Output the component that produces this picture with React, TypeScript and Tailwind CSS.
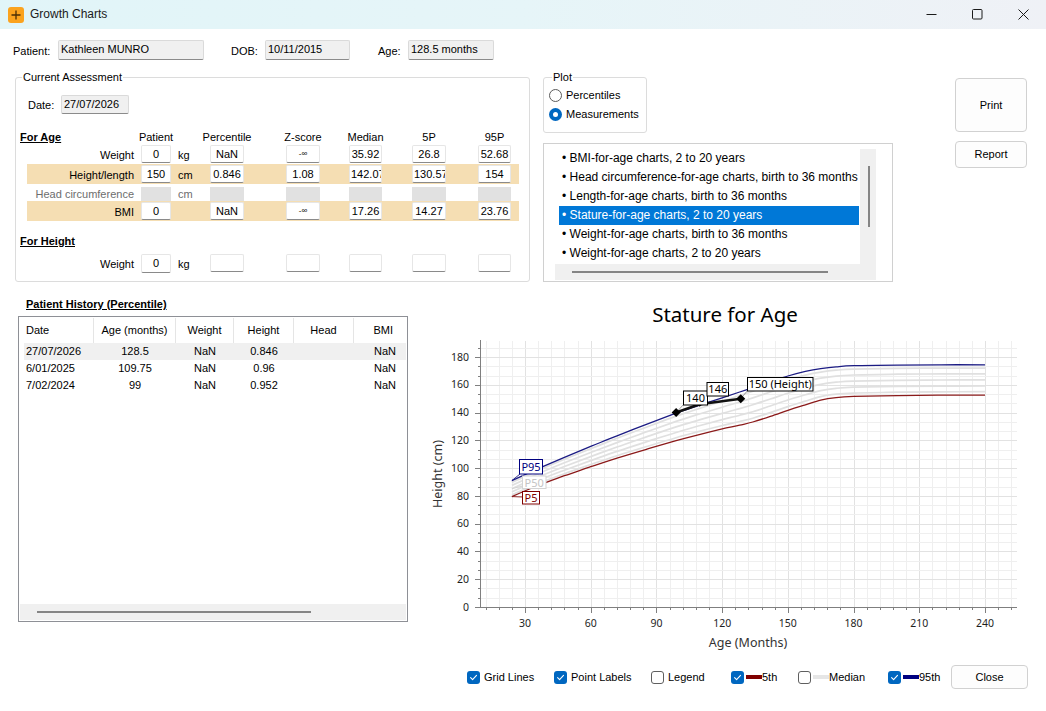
import React from "react";

type Pt = [number, number];

// chart scale (page pixels)
const ax = (m: number) => 459.29 + m * 2.1905;
const cy = (cm: number) => 607 - cm * 1.3889;

const AGES = [24, 36, 48, 60, 72, 86, 99, 110, 120, 128, 134, 142, 150, 158, 165, 172, 180, 200, 220, 240];
const P5 = [79.5, 87.5, 94.5, 101, 107.2, 113.8, 119.7, 124.3, 128.2, 130.9, 133.2, 137.2, 141.6, 145.6, 149, 150.8, 151.6, 152.2, 152.5, 152.6];
const P95 = [91, 99.6, 107.8, 115.6, 123.2, 131.8, 139.6, 145.5, 150.6, 154.8, 158, 162.3, 166.3, 169.6, 171.6, 172.9, 173.7, 174.2, 174.4, 174.4];
const MID = [0.11, 0.3, 0.5, 0.7, 0.89];

function smoothPath(pts: Pt[]) {
  const f = (n: number) => n.toFixed(1);
  let d = `M${f(pts[0][0])},${f(pts[0][1])}`;
  for (let i = 0; i < pts.length - 1; i++) {
    const p0 = pts[i - 1] ?? pts[i];
    const p1 = pts[i];
    const p2 = pts[i + 1];
    const p3 = pts[i + 2] ?? p2;
    const c1x = p1[0] + (p2[0] - p0[0]) / 6;
    const c1y = p1[1] + (p2[1] - p0[1]) / 6;
    const c2x = p2[0] - (p3[0] - p1[0]) / 6;
    const c2y = p2[1] - (p3[1] - p1[1]) / 6;
    d += ` C${f(c1x)},${f(c1y)} ${f(c2x)},${f(c2y)} ${f(p2[0])},${f(p2[1])}`;
  }
  return d;
}

const curve = (vals: number[]) => smoothPath(AGES.map((a, i) => [ax(a), cy(vals[i])] as Pt));
const midCurve = (fr: number) => curve(P5.map((v, i) => v + (P95[i] - v) * fr));

const POINTS: { m: number; cm: number; r: number }[] = [
  { m: 99, cm: 140, r: 4.5 },
  { m: 109.75, cm: 146, r: 2.5 },
  { m: 128.5, cm: 150, r: 4.5 },
];

const LIST = [
  "BMI-for-age charts, 2 to 20 years",
  "Head circumference-for-age charts, birth to 36 months",
  "Length-for-age charts, birth to 36 months",
  "Stature-for-age charts, 2 to 20 years",
  "Weight-for-age charts, birth to 36 months",
  "Weight-for-age charts, 2 to 20 years",
];

const HISTORY = [
  { date: "27/07/2026", age: "128.5", w: "NaN", h: "0.846", bmi: "NaN", hl: true },
  { date: "6/01/2025", age: "109.75", w: "NaN", h: "0.96", bmi: "NaN", hl: false },
  { date: "7/02/2024", age: "99", w: "NaN", h: "0.952", bmi: "NaN", hl: false },
];

function ReadOnly({ v, cls }: { v: string; cls: string }) {
  return (
    <div className={`${cls} h-[20px] bg-[#f0f0f0] border border-[#dadada] border-b-[#8b8b8b] rounded-[2px] pl-[2px] leading-[17px] whitespace-nowrap overflow-hidden`}>
      {v}
    </div>
  );
}

function NumBox({ v, cls }: { v?: string; cls: string }) {
  const small = v === "-∞";
  return (
    <div className={`${cls} h-[18px] bg-white border border-[#e6e6e6] border-b-[#8a8a8a] rounded-[2px] px-[1px] text-center leading-[16px] whitespace-nowrap overflow-hidden ${small ? "text-[8px]" : ""}`}>
      {v}
    </div>
  );
}

function Gray({ cls }: { cls: string }) {
  return <div className={`${cls} h-[14px] bg-[#e1e1e1]`} />;
}

function DataRow({ label, patient, unit, vals, band }: { label: string; patient: string; unit: string; vals: string[]; band?: boolean }) {
  return (
    <div className={`ml-[11px] w-[492px] h-[20px] flex items-center ${band ? "bg-[#f5deb3]" : ""}`}>
      <span className="w-[114px] text-right pr-[7px] pt-[3px] whitespace-nowrap">{label}</span>
      <NumBox cls="w-[30px]" v={patient} />
      <span className="w-[39px] pl-[7px] pt-[3px]">{unit}</span>
      <NumBox cls="w-[34px]" v={vals[0]} />
      <NumBox cls="w-[34px] ml-[42px]" v={vals[1]} />
      <NumBox cls="w-[33px] ml-[29px]" v={vals[2]} />
      <NumBox cls="w-[34px] ml-[30px]" v={vals[3]} />
      <NumBox cls="w-[33px] ml-[32px]" v={vals[4]} />
    </div>
  );
}

function Radio({ on, label }: { on?: boolean; label: string }) {
  return (
    <div className="h-[19px] flex items-center pl-[5px]">
      {on ? (
        <span className="w-[13px] h-[13px] rounded-full bg-[#0067c0] flex items-center justify-center">
          <span className="w-[5px] h-[5px] rounded-full bg-white" />
        </span>
      ) : (
        <span className="w-[13px] h-[13px] rounded-full border border-[#5b5b5b] bg-white" />
      )}
      <span className="ml-[4px]">{label}</span>
    </div>
  );
}

function Check({ on }: { on?: boolean }) {
  return on ? (
    <span className="w-[13px] h-[13px] shrink-0 rounded-[3px] bg-[#0067c0] flex items-center justify-center">
      <svg width="9" height="9" viewBox="0 0 9 9" fill="none">
        <path d="M1.6 4.7 L3.6 6.7 L7.5 2.4" stroke="#fff" strokeWidth="1.1" strokeLinecap="round" strokeLinejoin="round" />
      </svg>
    </span>
  ) : (
    <span className="w-[13px] h-[13px] shrink-0 rounded-[3px] border border-[#5f5f5f] bg-white" />
  );
}

function Chart() {
  const vLines: number[] = [];
  for (let m = 12; m <= 252; m += 6) vLines.push(m);
  const hLines: number[] = [];
  for (let k = 0; k <= 28; k++) hLines.push(k);
  const font = "'Noto Sans', 'Open Sans', sans-serif";
  const pts = POINTS.map((p) => [ax(p.m), cy(p.cm)] as Pt);

  return (
    <svg width={620} height={360} viewBox="420 295 620 360" className="block" fontFamily={font}>
      <text x={725} y={321.5} textAnchor="middle" fontSize={20.5} fill="#000">Stature for Age</text>

      {/* grid */}
      <g shapeRendering="crispEdges">
        {vLines.map((m) => (
          <line key={`v${m}`} x1={Math.round(ax(m)) + 0.5} x2={Math.round(ax(m)) + 0.5} y1={341} y2={607} stroke={m % 30 === 0 ? "#e2e2e2" : "#efefef"} />
        ))}
        {hLines.map((k) => (
          <line key={`h${k}`} x1={480} x2={1016.5} y1={Math.round(cy((k * 20) / 3)) + 0.5} y2={Math.round(cy((k * 20) / 3)) + 0.5} stroke={k % 3 === 0 ? "#e2e2e2" : "#efefef"} />
        ))}
        {hLines.map((k) => (
          <line key={`yt${k}`} x1={k % 3 === 0 ? 475 : 477.5} x2={480.5} y1={Math.round(cy((k * 20) / 3)) + 0.5} y2={Math.round(cy((k * 20) / 3)) + 0.5} stroke="#808080" />
        ))}
        {vLines.map((m) => (
          <line key={`xt${m}`} x1={Math.round(ax(m)) + 0.5} x2={Math.round(ax(m)) + 0.5} y1={607} y2={m % 30 === 0 ? 612.5 : 610} stroke="#808080" />
        ))}
        <line x1={480.5} x2={480.5} y1={340} y2={607.5} stroke="#7f7f7f" />
        <line x1={480} x2={1016.5} y1={607.5} y2={607.5} stroke="#7f7f7f" />
      </g>

      {/* axis labels */}
      {[0, 20, 40, 60, 80, 100, 120, 140, 160, 180].map((v) => (
        <text key={`yl${v}`} x={469} y={cy(v) + 3.7} textAnchor="end" fontSize={10.5} fill="#1e1e1e">{v}</text>
      ))}
      {[30, 60, 90, 120, 150, 180, 210, 240].map((m) => (
        <text key={`xl${m}`} x={ax(m)} y={626.5} textAnchor="middle" fontSize={10.5} fill="#1e1e1e">{m}</text>
      ))}
      <text transform="translate(442,474) rotate(-90)" textAnchor="middle" fontSize={12.5} fill="#333">Height (cm)</text>
      <text x={748} y={647} textAnchor="middle" fontSize={12.5} fill="#333">Age (Months)</text>

      {/* percentile curves */}
      {MID.map((fr) => (
        <path key={fr} d={midCurve(fr)} fill="none" stroke="#e0e0e0" strokeWidth={1.7} />
      ))}
      <path d={curve(P95)} fill="none" stroke="#1c1c84" strokeWidth={1.3} />
      <path d={curve(P5)} fill="none" stroke="#8b1a1a" strokeWidth={1.3} />

      {/* curve labels */}
      <line x1={ax(24)} y1={cy(91)} x2={520} y2={474} stroke="#1c1c84" strokeWidth={0.9} />
      <rect x={519.5} y={459.5} width={23} height={14.5} fill="#fff" stroke="#000080" />
      <text x={531} y={471} textAnchor="middle" fontSize={11} fill="#000080">P95</text>
      <line x1={ax(24)} y1={cy(85.25)} x2={523} y2={486} stroke="#d0d0d0" strokeWidth={0.9} />
      <rect x={522.5} y={476} width={23.5} height={12.5} fill="#fff" stroke="#d3d3d3" />
      <text x={534.2} y={486.5} textAnchor="middle" fontSize={11} fill="#c4c4c4">P50</text>
      <line x1={ax(24)} y1={cy(79.5)} x2={523} y2={497} stroke="#8b1a1a" strokeWidth={0.9} />
      <rect x={522.5} y={491.5} width={17} height={12.5} fill="#fff" stroke="#800000" />
      <text x={531} y={502} textAnchor="middle" fontSize={11} fill="#800000">P5</text>

      {/* patient points */}
      <line x1={pts[0][0]} y1={pts[0][1]} x2={684} y2={404} stroke="#777" strokeWidth={0.7} />
      <line x1={pts[1][0]} y1={pts[1][1]} x2={707} y2={395} stroke="#777" strokeWidth={0.7} />
      <line x1={pts[2][0]} y1={pts[2][1]} x2={748} y2={390} stroke="#777" strokeWidth={0.7} />
      <polyline points={pts.map((p) => p.join(",")).join(" ")} fill="none" stroke="#111" strokeWidth={2.6} strokeLinejoin="round" />
      {POINTS.map((p, i) => (
        <polygon
          key={p.m}
          points={`${pts[i][0]},${pts[i][1] - p.r} ${pts[i][0] + p.r},${pts[i][1]} ${pts[i][0]},${pts[i][1] + p.r} ${pts[i][0] - p.r},${pts[i][1]}`}
          fill="#000"
        />
      ))}
      <rect x={683.5} y={391} width={24} height={14} fill="#fff" stroke="#000" />
      <text x={695.5} y={402} textAnchor="middle" fontSize={11} fill="#000">140</text>
      <rect x={707} y={382.5} width={21.5} height={13.5} fill="#fff" stroke="#000" />
      <text x={717.8} y={393.3} textAnchor="middle" fontSize={11} fill="#000">146</text>
      <rect x={747.5} y={377.5} width={65.5} height={13.5} fill="#fff" stroke="#000" />
      <text x={780.2} y={388.3} textAnchor="middle" fontSize={11} fill="#000">150 (Height)</text>
    </svg>
  );
}

export default function App() {
  return (
    <div className="w-[1046px] h-[711px] bg-white overflow-hidden flex flex-col font-['Liberation_Sans',Arial,sans-serif] text-[11px] leading-[13px] text-black">
      {/* title bar */}
      <div className="h-[29px] shrink-0 flex items-center bg-linear-to-r from-[#e1f5f8] via-[#e6f5f8] to-[#eff1f6]">
        <div className="ml-[8px] w-[16px] h-[16px] rounded-[3px] bg-[#fba31e] flex items-center justify-center">
          <svg width="10" height="10" viewBox="0 0 10 10">
            <path d="M5 0.5 V9.5 M0.5 5 H9.5" stroke="#4a2e05" strokeWidth="1.3" />
          </svg>
        </div>
        <span className="ml-[6px] text-[12px] text-[#1a1a1a]">Growth Charts</span>
        <div className="ml-auto flex">
          <div className="w-[46px] h-[29px] flex items-center justify-center">
            <svg width="11" height="11" viewBox="0 0 11 11"><path d="M0.5 5.5 H10.5" stroke="#1a1a1a" /></svg>
          </div>
          <div className="w-[46px] h-[29px] flex items-center justify-center">
            <svg width="11" height="11" viewBox="0 0 11 11"><rect x="0.5" y="0.5" width="9.5" height="9.5" rx="1" fill="none" stroke="#1a1a1a" /></svg>
          </div>
          <div className="w-[46px] h-[29px] flex items-center justify-center">
            <svg width="11" height="11" viewBox="0 0 11 11"><path d="M0.5 0.5 L10.5 10.5 M10.5 0.5 L0.5 10.5" stroke="#1a1a1a" /></svg>
          </div>
        </div>
      </div>

      {/* patient row */}
      <div className="mt-[11px] h-[20px] shrink-0 flex items-center pl-[13px]">
        <span className="w-[45px] pt-[2px]">Patient:</span>
        <ReadOnly cls="w-[146px]" v="Kathleen MUNRO" />
        <span className="ml-[27px] w-[34px] pt-[2px]">DOB:</span>
        <ReadOnly cls="w-[85px]" v="10/11/2015" />
        <span className="ml-[28px] w-[30px] pt-[2px]">Age:</span>
        <ReadOnly cls="w-[86px]" v="128.5 months" />
      </div>

      {/* assessment + plot options */}
      <div className="mt-[11px] h-[212px] shrink-0 flex items-start">
        <fieldset className="ml-[15px] w-[515px] h-[211px] border border-[#dcdcdc] rounded-[3px] min-w-0">
          <legend className="ml-[6px] px-[1px] leading-[13px]">Current Assessment</legend>
          <div className="mt-[11px] h-[19px] flex items-center pl-[12px]">
            <span className="w-[33px] pt-[2px]">Date:</span>
            <div className="w-[68px] h-[19px] bg-[#f0f0f0] border border-[#dadada] border-b-[#8b8b8b] rounded-[2px] pl-[2px] leading-[16px]">27/07/2026</div>
          </div>

          <div className="mt-[16px] h-[14px] flex items-center ml-[4px]">
            <span className="w-[121px] font-bold underline">For Age</span>
            <span className="w-[30px] flex justify-center whitespace-nowrap">Patient</span>
            <span className="w-[39px]" />
            <span className="w-[34px] flex justify-center whitespace-nowrap">Percentile</span>
            <span className="w-[34px] ml-[42px] flex justify-center whitespace-nowrap">Z-score</span>
            <span className="w-[33px] ml-[29px] flex justify-center whitespace-nowrap">Median</span>
            <span className="w-[34px] ml-[30px] flex justify-center whitespace-nowrap">5P</span>
            <span className="w-[33px] ml-[32px] flex justify-center whitespace-nowrap">95P</span>
          </div>

          <DataRow label="Weight" patient="0" unit="kg" vals={["NaN", "-∞", "35.92", "26.8", "52.68"]} />
          <DataRow band label="Height/length" patient="150" unit="cm" vals={["0.846", "1.08", "142.07", "130.57", "154"]} />
          <div className="ml-[11px] w-[492px] h-[17px] flex items-end text-[#6d6d6d]">
            <span className="w-[114px] text-right pr-[7px] whitespace-nowrap">Head circumference</span>
            <Gray cls="w-[30px]" />
            <span className="w-[39px] pl-[7px]">cm</span>
            <Gray cls="w-[34px]" />
            <Gray cls="w-[34px] ml-[42px]" />
            <Gray cls="w-[33px] ml-[29px]" />
            <Gray cls="w-[34px] ml-[30px]" />
            <Gray cls="w-[33px] ml-[32px]" />
          </div>
          <DataRow band label="BMI" patient="0" unit="" vals={["NaN", "-∞", "17.26", "14.27", "23.76"]} />

          <div className="mt-[13px] h-[14px] flex items-center ml-[4px]">
            <span className="font-bold underline">For Height</span>
          </div>
          <div className="mt-[5px] ml-[11px] w-[492px] h-[20px] flex items-center">
            <span className="w-[114px] text-right pr-[7px] pt-[3px]">Weight</span>
            <NumBox cls="w-[30px] h-[19px]" v="0" />
            <span className="w-[39px] pl-[7px] pt-[3px]">kg</span>
            <NumBox cls="w-[34px]" />
            <NumBox cls="w-[34px] ml-[42px]" />
            <NumBox cls="w-[33px] ml-[29px]" />
            <NumBox cls="w-[34px] ml-[30px]" />
            <NumBox cls="w-[33px] ml-[32px]" />
          </div>
        </fieldset>

        <div className="ml-[13px] w-[350px] flex flex-col">
          <fieldset className="w-[104px] h-[62px] border border-[#dcdcdc] rounded-[3px] min-w-0">
            <legend className="ml-[8px] px-[1px] leading-[13px]">Plot</legend>
            <div className="mt-[2px]">
              <Radio label="Percentiles" />
              <Radio on label="Measurements" />
            </div>
          </fieldset>

          <div className="mt-[10px] h-[139px] w-[350px] border border-[#d0d0d0] pl-[11px] pt-[5px]">
            <div className="w-[321px] h-[131px] bg-[#f0f0f0] flex flex-col">
              <div className="h-[115px] flex">
                <div className="w-[305px] h-[115px] bg-white overflow-hidden text-[12px] leading-[19px]">
                  {LIST.map((item) => {
                    const sel = item.startsWith("Stature");
                    return (
                      <div key={item} className={`ml-[4px] w-[300px] h-[19px] pl-[3px] whitespace-nowrap ${sel ? "bg-[#0078d7] text-white" : ""}`}>
                        • {item}
                      </div>
                    );
                  })}
                </div>
                <div className="flex-1">
                  <div className="ml-[8px] mt-[17px] w-[2px] h-[61px] bg-[#858585]" />
                </div>
              </div>
              <div className="flex-1 flex items-center">
                <div className="ml-[17px] w-[256px] h-[2px] bg-[#858585]" />
              </div>
            </div>
          </div>
        </div>

        <div className="ml-[62px] w-[72px] flex flex-col">
          <button className="mt-[7px] h-[54px] rounded-[4px] border border-[#d1d1d1] bg-[#fdfdfd] text-[11px]">Print</button>
          <button className="mt-[9px] h-[27px] rounded-[4px] border border-[#d1d1d1] bg-[#fdfdfd] text-[11px]">Report</button>
        </div>
      </div>

      {/* history + chart */}
      <div className="h-[378px] shrink-0 flex items-start">
        <div className="ml-[18px] w-[390px]">
          <div className="mt-[15px] h-[13px] pl-[8px] font-bold underline">Patient History (Percentile)</div>
          <div className="mt-[5px] h-[306px] border border-[#8e9096] flex flex-col">
            <div className="mt-[1px] h-[25px] flex">
              <div className="w-[75px] pl-[7px] flex items-center border-r border-[#e5e5e5]">Date</div>
              <div className="w-[82px] flex items-center justify-center border-r border-[#e5e5e5]">Age (months)</div>
              <div className="w-[58px] flex items-center justify-center border-r border-[#e5e5e5]">Weight</div>
              <div className="w-[60px] flex items-center justify-center border-r border-[#e5e5e5]">Height</div>
              <div className="w-[60px] flex items-center justify-center border-r border-[#e5e5e5]">Head</div>
              <div className="flex-1 flex items-center justify-end pr-[14px]">BMI</div>
            </div>
            {HISTORY.map((r) => (
              <div key={r.date} className={`ml-[5px] mr-[1px] h-[17px] flex items-center ${r.hl ? "bg-[#f0f0f0]" : ""}`}>
                <div className="w-[70px] pl-[2px]">{r.date}</div>
                <div className="w-[82px] text-center">{r.age}</div>
                <div className="w-[58px] text-center">{r.w}</div>
                <div className="w-[60px] text-center">{r.h}</div>
                <div className="w-[60px]" />
                <div className="flex-1 text-right pr-[10px]">{r.bmi}</div>
              </div>
            ))}
            <div className="flex-1" />
            <div className="h-[16px] mx-[1px] mb-[1px] bg-[#f0f0f0] flex items-center">
              <div className="ml-[17px] w-[274px] h-[2px] bg-[#858585]" />
            </div>
          </div>
        </div>
        <div className="mt-[12px] ml-[12px]">
          <Chart />
        </div>
      </div>

      {/* bottom options */}
      <div className="mt-[4px] h-[24px] shrink-0 flex items-center pl-[467px]">
        <div className="w-[87px] flex items-center">
          <Check on />
          <span className="ml-[4px]">Grid Lines</span>
        </div>
        <div className="w-[97px] flex items-center">
          <Check on />
          <span className="ml-[4px]">Point Labels</span>
        </div>
        <div className="w-[80px] flex items-center">
          <Check />
          <span className="ml-[4px]">Legend</span>
        </div>
        <div className="w-[67px] flex items-center">
          <Check on />
          <span className="ml-[2px] w-[16px] h-[4px] bg-[#800000]" />
          <span>5th</span>
        </div>
        <div className="w-[90px] flex items-center">
          <Check />
          <span className="ml-[2px] w-[16px] h-[4px] bg-[#e6e6e6]" />
          <span>Median</span>
        </div>
        <div className="w-[63px] flex items-center">
          <Check on />
          <span className="ml-[2px] w-[16px] h-[4px] bg-[#000080]" />
          <span>95th</span>
        </div>
        <button className="w-[77px] h-[24px] rounded-[4px] border border-[#d1d1d1] bg-[#fdfdfd] text-[11px]">Close</button>
      </div>
    </div>
  );
}
